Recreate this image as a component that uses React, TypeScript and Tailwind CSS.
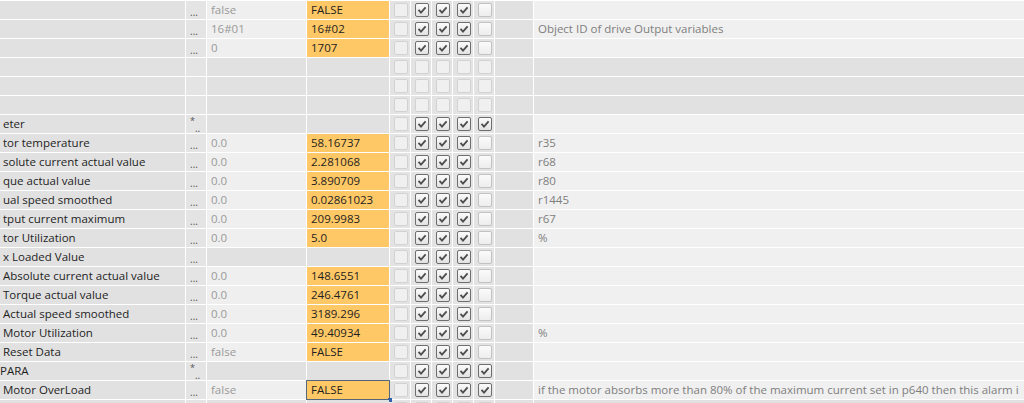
import React from "react";

type Row = {
  name: string;
  namePad?: string;
  dots?: "..." | "*...";
  def?: string;
  val?: string;
  checks: number[];
  comment?: string;
  empty?: boolean;
  selected?: boolean;
};

const on = [0, 1, 1, 1, 0];
const all = [0, 1, 1, 1, 1];
const none = [0, 0, 0, 0, 0];

const rows: Row[] = [
  { name: "", dots: "...", def: "false", val: "FALSE", checks: on },
  { name: "", dots: "...", def: "16#01", val: "16#02", checks: on, comment: "Object ID of drive Output variables" },
  { name: "", dots: "...", def: "0", val: "1707", checks: on },
  { name: "", checks: none, empty: true },
  { name: "", checks: none, empty: true },
  { name: "", checks: none, empty: true },
  { name: "eter", dots: "*...", checks: all },
  { name: "tor temperature", dots: "...", def: "0.0", val: "58.16737", checks: on, comment: "r35" },
  { name: "solute current actual value", dots: "...", def: "0.0", val: "2.281068", checks: on, comment: "r68" },
  { name: "que actual value", dots: "...", def: "0.0", val: "3.890709", checks: on, comment: "r80" },
  { name: "ual speed smoothed", dots: "...", def: "0.0", val: "0.02861023", checks: on, comment: "r1445" },
  { name: "tput current maximum", dots: "...", def: "0.0", val: "209.9983", checks: on, comment: "r67" },
  { name: "tor Utilization", dots: "...", def: "0.0", val: "5.0", checks: on, comment: "%" },
  { name: "x Loaded Value", dots: "...", checks: on },
  { name: "Absolute current actual value", dots: "...", def: "0.0", val: "148.6551", checks: on },
  { name: "Torque actual value", dots: "...", def: "0.0", val: "246.4761", checks: on },
  { name: "Actual speed smoothed", dots: "...", def: "0.0", val: "3189.296", checks: on },
  { name: "Motor Utilization", dots: "...", def: "0.0", val: "49.40934", checks: on, comment: "%" },
  { name: "Reset Data", dots: "...", def: "false", val: "FALSE", checks: on },
  { name: "PARA", namePad: "pl-0", dots: "*...", checks: all },
  {
    name: "Motor OverLoad",
    dots: "...",
    def: "false",
    val: "FALSE",
    checks: all,
    selected: true,
    comment: "if the motor absorbs more than 80% of the maximum current set in p640 then this alarm i",
  },
  { name: "", checks: none, empty: true },
];

function Check({ checked, dim }: { checked: boolean; dim: boolean }) {
  if (checked) {
    return (
      <div className="flex h-[14px] w-[14px] items-center justify-center rounded-[2px] border border-[#6e6e6e] bg-gradient-to-b from-[#fbfbfb] to-[#e2e2e2]">
        <svg width="10" height="10" viewBox="0 0 10 10">
          <polyline points="1.5,4.8 4,7.6 8.6,2.4" fill="none" stroke="#4d4d4d" strokeWidth="1.8" />
        </svg>
      </div>
    );
  }
  return (
    <div
      className={
        dim
          ? "h-[14px] w-[14px] rounded-[2px] border border-[#d2d2d2] bg-[#f0f0f0]"
          : "h-[14px] w-[14px] rounded-[2px] border border-[#c2c2c2] bg-gradient-to-b from-[#fbfbfb] to-[#ededed]"
      }
    />
  );
}

function Dots({ kind }: { kind?: "..." | "*..." }) {
  if (!kind) return null;
  if (kind === "*...") {
    return (
      <span className="flex h-full items-start text-[#555]">
        <span className="pt-[1px] text-[9px] leading-none">*</span>
        <span className="pt-[8px] text-[10px] leading-none">..</span>
      </span>
    );
  }
  return <span className="pt-[3px] text-[10px] leading-none text-[#555]">...</span>;
}

function TableRow({ r }: { r: Row }) {
  return (
    <div className="grid h-[18px] grid-cols-[185px_20px_99px_82px_20px_20px_20px_20px_20px_38px_1fr] gap-x-px">
      <div className={`flex items-center overflow-hidden whitespace-nowrap bg-[#e1e1e1] text-[#1e1e1e] ${r.namePad ?? "pl-[3px]"}`}>
        {r.name}
      </div>
      <div className="flex items-center bg-[#e4e4e4] pl-[4px]">
        <Dots kind={r.dots} />
      </div>
      <div className={`flex items-center pl-[4px] text-[#9a9a9a] ${r.def !== undefined ? "bg-[#efefef]" : "bg-[#e1e1e1]"}`}>
        {r.def}
      </div>
      <div className={`relative flex items-center pl-[4px] text-[#1e1e1e] ${r.val !== undefined ? "bg-[#fec866]" : "bg-[#e1e1e1]"}`}>
        {r.val}
        {r.selected && (
          <>
            <div className="pointer-events-none absolute -inset-px border border-[#56667a]" />
            <div className="absolute -bottom-[3px] -right-[3px] h-[4px] w-[4px] bg-[#3561a8]" />
          </>
        )}
      </div>
      {r.checks.map((c, i) => (
        <div key={i} className="flex items-center justify-center bg-[#e3e3e3] pl-px">
          <Check checked={c === 1} dim={i === 0 || !!r.empty} />
        </div>
      ))}
      <div className="bg-[#e1e1e1]" />
      <div className={`flex items-center overflow-hidden whitespace-nowrap pl-[4px] text-[#7e7e7e] ${r.empty ? "bg-[#e1e1e1]" : "bg-[#f0f0f0]"}`}>
        {r.comment}
      </div>
    </div>
  );
}

export default function App() {
  return (
    <div className="h-[403px] w-[1024px] overflow-hidden bg-white font-['Open_Sans','Noto_Sans',sans-serif] text-[11.5px]">
      <div className="flex flex-col gap-y-px pt-px">
        {rows.map((r, i) => (
          <TableRow key={i} r={r} />
        ))}
      </div>
    </div>
  );
}
